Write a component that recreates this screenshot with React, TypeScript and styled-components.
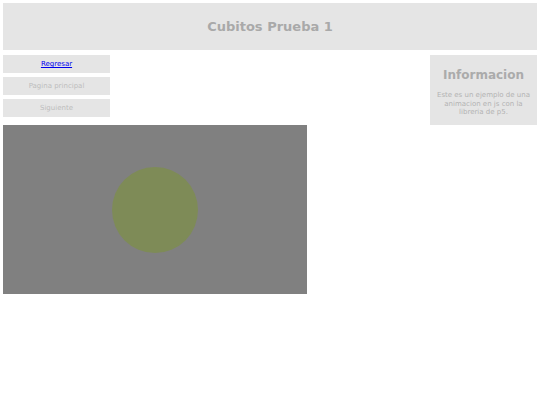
import React from "react";
import styled, { createGlobalStyle } from "styled-components";

const GlobalStyle = createGlobalStyle`
  html, body {
    margin: 0;
    padding: 0;
    background: #ffffff;
  }
  body {
    font-family: "DejaVu Sans", Verdana, sans-serif;
  }
`;

const Page = styled.div`
  padding: 3px;
  display: flex;
  flex-direction: column;
  gap: 5px;
`;

const Header = styled.header`
  height: 47px;
  background: #e5e5e5;
  display: flex;
  align-items: center;
  justify-content: center;
`;

const Title = styled.h1`
  margin: 0;
  font-size: 13px;
  font-weight: bold;
  color: #a9a9a9;
`;

const Main = styled.div`
  display: flex;
  justify-content: space-between;
  align-items: flex-start;
`;

const LeftColumn = styled.div`
  display: flex;
  flex-direction: column;
  gap: 8px;
`;

const Nav = styled.nav`
  width: 107px;
  display: flex;
  flex-direction: column;
  gap: 4px;
`;

const NavItem = styled.a<{ $active?: boolean }>`
  height: 18px;
  background: #e5e5e5;
  display: flex;
  align-items: center;
  justify-content: center;
  font-size: 7px;
  color: ${(p) => (p.$active ? "#0000ee" : "#bdbdbd")};
  text-decoration: ${(p) => (p.$active ? "underline" : "none")};
  cursor: pointer;
`;

const Sketch = styled.div`
  width: 304px;
  height: 169px;
  background: #808080;
  display: flex;
  align-items: center;
  justify-content: center;
`;

const Info = styled.aside`
  width: 107px;
  height: 70px;
  box-sizing: border-box;
  background: #e5e5e5;
  padding: 13px 4px 0;
  text-align: center;
`;

const InfoTitle = styled.h2`
  margin: 0 0 8px;
  font-size: 12px;
  font-weight: bold;
  color: #ababab;
  line-height: 15px;
`;

const InfoText = styled.p`
  margin: 0;
  font-size: 7px;
  line-height: 8.5px;
  color: #b3b3b3;
`;

export default function App() {
  return (
    <>
      <GlobalStyle />
      <Page>
        <Header>
          <Title>Cubitos Prueba 1</Title>
        </Header>
        <Main>
          <LeftColumn>
            <Nav>
              <NavItem $active href="#">
                Regresar
              </NavItem>
              <NavItem>Pagina principal</NavItem>
              <NavItem>Siguiente</NavItem>
            </Nav>
            <Sketch>
              <svg width="86" height="86" viewBox="0 0 86 86">
                <circle cx="43" cy="43" r="43" fill="#7e8b57" />
              </svg>
            </Sketch>
          </LeftColumn>
          <Info>
            <InfoTitle>Informacion</InfoTitle>
            <InfoText>Este es un ejemplo de una animacion en js con la libreria de p5.</InfoText>
          </Info>
        </Main>
      </Page>
    </>
  );
}
